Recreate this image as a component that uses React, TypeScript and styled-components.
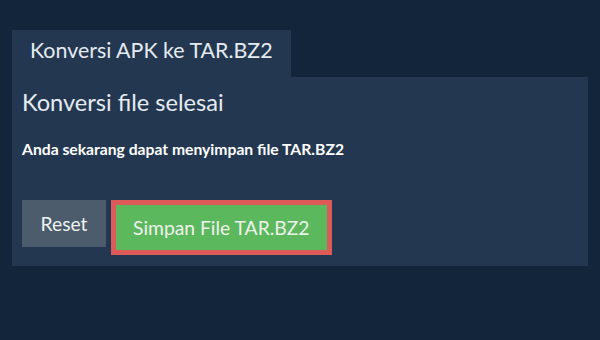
import React from "react";
import styled, { createGlobalStyle } from "styled-components";

const Global = createGlobalStyle`
  html, body { margin: 0; padding: 0; background: #13253b; }
  body { font-family: Lato, "Open Sans", sans-serif; width: 600px; height: 340px; overflow: hidden; }
`;

const Page = styled.div`
  padding: 30px 12px 0 12px;
`;

const Tabs = styled.div`
  display: flex;
`;

const Tab = styled.div`
  background: #233850;
  color: #e6ebf0;
  font-size: 21.4px;
  font-weight: 400;
  line-height: 26px;
  height: 47px;
  box-sizing: border-box;
  padding: 7px 18px 0 18px;
`;

const Panel = styled.div`
  background: #233850;
  height: 189px;
  box-sizing: border-box;
  padding: 11px 10px 0 10px;
  display: flex;
  flex-direction: column;
`;

const Heading = styled.h2`
  margin: 0;
  font-size: 23.6px;
  font-weight: 400;
  color: #e6ebf0;
  line-height: 28px;
`;

const Message = styled.p`
  margin: 23px 0 0 0;
  font-size: 15.7px;
  font-weight: 700;
  color: #ffffff;
  line-height: 20px;
`;

const Actions = styled.div`
  display: flex;
  align-items: flex-start;
  gap: 5px;
  margin-top: 41px;
`;

const Button = styled.button<{ $variant: "neutral" | "success" }>`
  font-family: Lato, "Open Sans", sans-serif;
  font-size: 19.3px;
  font-weight: 400;
  color: #eef2ee;
  border: ${(p) => (p.$variant === "success" ? "5px solid #dc5b58" : "none")};
  background: ${(p) => (p.$variant === "success" ? "#5cb85c" : "#4d5c6d")};
  height: ${(p) => (p.$variant === "success" ? "55px" : "47px")};
  padding: ${(p) => (p.$variant === "success" ? "0 17px" : "0 18.5px")};
  box-sizing: border-box;
  cursor: pointer;
`;

export default function App() {
  return (
    <>
      <Global />
      <Page>
        <Tabs>
          <Tab>Konversi APK ke TAR.BZ2</Tab>
        </Tabs>
        <Panel>
          <Heading>Konversi file selesai</Heading>
          <Message>Anda sekarang dapat menyimpan file TAR.BZ2</Message>
          <Actions>
            <Button $variant="neutral">Reset</Button>
            <Button $variant="success">Simpan File TAR.BZ2</Button>
          </Actions>
        </Panel>
      </Page>
    </>
  );
}
